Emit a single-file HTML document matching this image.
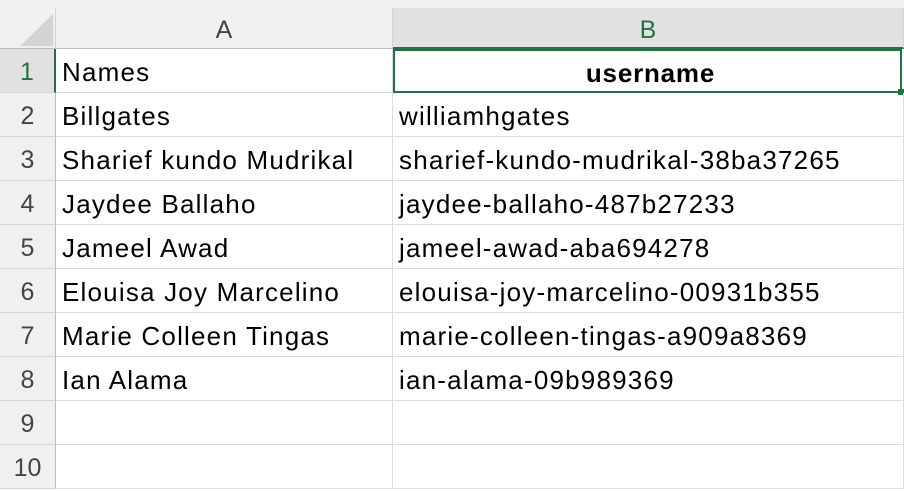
<!DOCTYPE html>
<html><head><style>
body{margin:0;width:904px;height:484px;overflow:hidden;background:#fff;font-family:"Liberation Sans",sans-serif;position:relative}
.top{position:absolute;left:0;top:0;width:904px;height:8px;background:#f0f0f0;border-bottom:1px solid #d8d8d8}
.hdr{position:absolute;top:8px;height:41px;background:#f0f0f0;color:#444;font-size:25px;text-align:center;line-height:44px;box-sizing:border-box;border-right:1px solid #d4d4d4;border-bottom:1px solid #bdbdbd}
.rn{position:absolute;left:0;width:56px;height:44px;background:#f0f0f0;color:#444;font-size:25px;text-align:center;line-height:46px;box-sizing:border-box;border-bottom:1px solid #d4d4d4;border-right:1px solid #bdbdbd}
.c{position:absolute;height:44px;box-sizing:border-box;border-bottom:1px solid #dcdcdc;border-right:1px solid #dcdcdc;font-size:26px;letter-spacing:1.2px;line-height:47px;padding-left:6px;color:#000;white-space:nowrap}
</style></head><body>
<div class="top"></div>
<div class="hdr" style="left:0;width:56px"><svg width="56" height="41" style="position:absolute;left:0;top:0"><polygon points="53,6 53,38 20,38" fill="#d4d4d4"/></svg></div>
<div class="hdr" style="left:56px;width:337px">A</div>
<div class="hdr" style="left:393px;width:511px;background:#e1e1e1;color:#217346;border-bottom:2px solid #217346">B</div>
<div class="rn" style="top:49px;background:#e1e1e1;color:#217346;border-right:2px solid #217346">1</div>
<div class="rn" style="top:93px">2</div><div class="rn" style="top:137px">3</div><div class="rn" style="top:181px">4</div><div class="rn" style="top:225px">5</div><div class="rn" style="top:269px">6</div><div class="rn" style="top:313px">7</div><div class="rn" style="top:357px">8</div><div class="rn" style="top:401px">9</div><div class="rn" style="top:445px">10</div>
<div class="c" style="left:56px;top:49px;width:337px">Names</div>
<div class="c" style="left:393px;top:49px;text-align:center;font-weight:bold;border:2px solid #217346;line-height:45px;width:509px;letter-spacing:0.8px">username</div>
<div style="position:absolute;left:898px;top:89px;width:6px;height:6px;background:#217346"></div>
<div class="c" style="left:56px;top:93px;width:337px">Billgates</div><div class="c" style="left:393px;top:93px;width:511px">williamhgates</div>
<div class="c" style="left:56px;top:137px;width:337px">Sharief kundo Mudrikal</div><div class="c" style="left:393px;top:137px;width:511px">sharief-kundo-mudrikal-38ba37265</div>
<div class="c" style="left:56px;top:181px;width:337px">Jaydee Ballaho</div><div class="c" style="left:393px;top:181px;width:511px">jaydee-ballaho-487b27233</div>
<div class="c" style="left:56px;top:225px;width:337px">Jameel Awad</div><div class="c" style="left:393px;top:225px;width:511px">jameel-awad-aba694278</div>
<div class="c" style="left:56px;top:269px;width:337px">Elouisa Joy Marcelino</div><div class="c" style="left:393px;top:269px;width:511px">elouisa-joy-marcelino-00931b355</div>
<div class="c" style="left:56px;top:313px;width:337px">Marie Colleen Tingas</div><div class="c" style="left:393px;top:313px;width:511px">marie-colleen-tingas-a909a8369</div>
<div class="c" style="left:56px;top:357px;width:337px">Ian Alama</div><div class="c" style="left:393px;top:357px;width:511px">ian-alama-09b989369</div>
<div class="c" style="left:56px;top:401px;width:337px"></div><div class="c" style="left:393px;top:401px;width:511px"></div>
<div class="c" style="left:56px;top:445px;width:337px"></div><div class="c" style="left:393px;top:445px;width:511px"></div>
</body></html>
